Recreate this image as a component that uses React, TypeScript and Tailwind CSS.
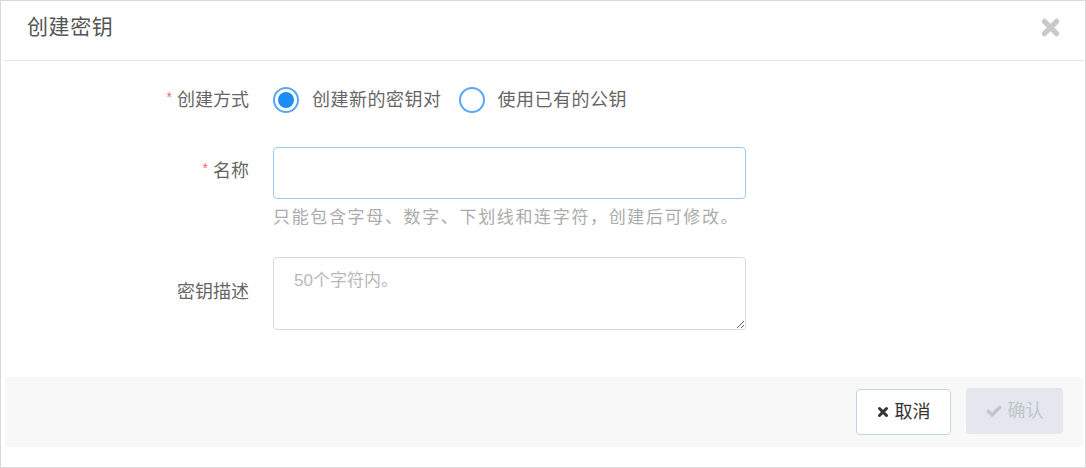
import { useState } from 'react'

const FONT = '"Liberation Sans", "Noto Sans CJK SC", sans-serif'

function TimesIcon({ className }: { className?: string }) {
  return (
    <svg className={className} viewBox="0 0 24 24" fill="none" stroke="currentColor">
      <path strokeWidth={6} strokeLinecap="round" d="M5 5l14 14M19 5L5 19" />
    </svg>
  )
}

function CheckIcon({ className }: { className?: string }) {
  return (
    <svg className={className} viewBox="0 0 24 24" fill="none" stroke="currentColor">
      <path strokeWidth={5} strokeLinecap="round" strokeLinejoin="round" d="M3.5 12.5l5.5 5.5L20.5 6.5" />
    </svg>
  )
}

function Radio({ checked, label, onClick }: { checked: boolean; label: string; onClick: () => void }) {
  return (
    <button type="button" onClick={onClick} className="flex items-center cursor-pointer">
      <span className="w-[26px] h-[26px] rounded-full border-2 border-[#5aa8f5] flex items-center justify-center bg-white">
        {checked && <span className="w-[16px] h-[16px] rounded-full bg-[#1e8cf7]" />}
      </span>
      <span className="ml-[13px] text-[18px] text-[#666] tracking-[0.5px]">{label}</span>
    </button>
  )
}

export default function App() {
  const [mode, setMode] = useState<'new' | 'existing'>('new')

  return (
    <div className="w-[1086px] h-[468px] bg-white border border-[#dadada] overflow-hidden" style={{ fontFamily: FONT }}>
      <div className="ml-[4px] mr-[2px] flex flex-col">
        {/* Header */}
        <div className="h-[60px] flex items-center justify-between pl-[22px] pr-[22px] border-b border-[#dde4ec]">
          <span className="text-[21px] text-[#555] tracking-[0.6px] -mt-[7px]">创建密钥</span>
          <button type="button" className="text-[#c9c9c9] -mt-[7px]" aria-label="Close">
            <TimesIcon className="w-[21px] h-[21px]" />
          </button>
        </div>

        {/* Form */}
        <div className="flex flex-col pt-[26px]">
          <div className="flex items-center h-[26px]">
            <label className="w-[244px] text-right text-[18px] text-[#666]">
              <span className="text-[#f56c6c] text-[14px] mr-[5px] align-top">*</span>创建方式
            </label>
            <div className="ml-[24px] flex items-center gap-[17px]">
              <Radio checked={mode === 'new'} label="创建新的密钥对" onClick={() => setMode('new')} />
              <Radio checked={mode === 'existing'} label="使用已有的公钥" onClick={() => setMode('existing')} />
            </div>
          </div>

          <div className="flex items-center mt-[34px]">
            <label className="w-[244px] text-right text-[18px] text-[#666] -mt-[4px]">
              <span className="text-[#f56c6c] text-[14px] mr-[5px] align-top">*</span>名称
            </label>
            <input
              type="text"
              className="ml-[24px] w-[473px] h-[52px] rounded-[4px] border border-[#9dcbf7] outline-none px-[20px] text-[17px] text-[#555]"
            />
          </div>
          <div className="ml-[268px] mt-[7px] text-[17px] leading-[24px] text-[#ababab] tracking-[1.65px]">
            只能包含字母、数字、下划线和连字符，创建后可修改。
          </div>

          <div className="flex items-center mt-[27px]">
            <label className="w-[244px] text-right text-[18px] text-[#666] -mt-[3px]">密钥描述</label>
            <textarea
              placeholder="50个字符内。"
              className="ml-[24px] w-[473px] h-[73px] rounded-[4px] border border-[#d2dce8] outline-none px-[20px] pt-[10px] text-[17px] text-[#555] placeholder:text-[#b8b8b8]"
            />
          </div>
        </div>

        {/* Footer */}
        <div className="mt-[47px] h-[70px] bg-[#f8f8f8] flex items-center justify-end gap-[15px] pr-[20px]">
          <button
            type="button"
            className="w-[95px] h-[46px] rounded-[4px] border border-[#c3d4e8] bg-white flex items-center justify-center gap-[6px] text-[18px] text-[#333]"
          >
            <TimesIcon className="w-[12px] h-[12px]" />
            取消
          </button>
          <button
            type="button"
            disabled
            className="w-[97px] h-[46px] rounded-[4px] bg-[#e4e8ee] flex items-center justify-center gap-[6px] text-[18px] text-[#c1c5cc] -mt-[2px]"
          >
            <CheckIcon className="w-[16px] h-[16px]" />
            确认
          </button>
        </div>
      </div>
    </div>
  )
}
